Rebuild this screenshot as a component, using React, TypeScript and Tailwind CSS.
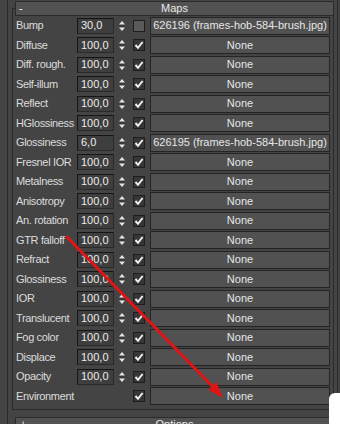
import React from "react";

type Row = { label: string; value?: string; checked: boolean; map: string };

const rows: Row[] = [
  { label: "Bump", value: "30,0", checked: false, map: "626196 (frames-hob-584-brush.jpg)" },
  { label: "Diffuse", value: "100,0", checked: true, map: "None" },
  { label: "Diff. rough.", value: "100,0", checked: true, map: "None" },
  { label: "Self-illum", value: "100,0", checked: true, map: "None" },
  { label: "Reflect", value: "100,0", checked: true, map: "None" },
  { label: "HGlossiness", value: "100,0", checked: true, map: "None" },
  { label: "Glossiness", value: "6,0", checked: true, map: "626195 (frames-hob-584-brush.jpg)" },
  { label: "Fresnel IOR", value: "100,0", checked: true, map: "None" },
  { label: "Metalness", value: "100,0", checked: true, map: "None" },
  { label: "Anisotropy", value: "100,0", checked: true, map: "None" },
  { label: "An. rotation", value: "100,0", checked: true, map: "None" },
  { label: "GTR falloff", value: "100,0", checked: true, map: "None" },
  { label: "Refract", value: "100,0", checked: true, map: "None" },
  { label: "Glossiness", value: "100,0", checked: true, map: "None" },
  { label: "IOR", value: "100,0", checked: true, map: "None" },
  { label: "Translucent", value: "100,0", checked: true, map: "None" },
  { label: "Fog color", value: "100,0", checked: true, map: "None" },
  { label: "Displace", value: "100,0", checked: true, map: "None" },
  { label: "Opacity", value: "100,0", checked: true, map: "None" },
  { label: "Environment", checked: true, map: "None" },
];

function Spinner() {
  return (
    <svg width="10" height="14" viewBox="0 0 10 14" className="ml-[3px] shrink-0">
      <polygon points="2,5.5 5,2 8,5.5" fill="#e6e6e6" />
      <line x1="2" y1="7" x2="8" y2="7" stroke="#2e2e2e" strokeWidth="1" />
      <polygon points="2,8.5 5,12 8,8.5" fill="#e6e6e6" />
    </svg>
  );
}

function Check({ checked }: { checked: boolean }) {
  return (
    <div
      className={
        checked
          ? "w-[12px] h-[12px] border border-[#1e1e1e] bg-[#363636] flex items-center justify-center shrink-0"
          : "w-[12px] h-[12px] border border-[#1e1e1e] bg-[#5a5a5a] shrink-0"
      }
    >
      {checked && (
        <svg width="10" height="10" viewBox="0 0 10 10">
          <path d="M1.5 5 L4 7.8 L8.6 2" stroke="#f0f0f0" strokeWidth="2" fill="none" />
        </svg>
      )}
    </div>
  );
}

function MapRow({ r }: { r: Row }) {
  return (
    <div className="h-[19.5px] flex items-center pl-[3px]">
      <div className="w-[61px] shrink-0 whitespace-nowrap leading-none tracking-[-0.35px] overflow-visible">{r.label}</div>
      {r.value ? (
        <>
          <div className="w-[37px] h-[16px] shrink-0 border border-t-[#151515] border-l-[#151515] border-r-[#2a2a2a] border-b-[#2a2a2a] bg-[#3e3e3e] text-[#ececec] pl-[3px] flex items-center leading-none">
            {r.value}
          </div>
          <Spinner />
        </>
      ) : (
        <div className="w-[50px] shrink-0" />
      )}
      <div className="ml-[6px]">
        <Check checked={r.checked} />
      </div>
      <div className="ml-[5px] w-[180px] h-[18px] shrink-0 border border-[#242424] bg-[#515151] text-[#e6e6e6] flex items-center justify-center whitespace-nowrap leading-none">
        {r.map}
      </div>
    </div>
  );
}

export default function App() {
  return (
    <div className="relative w-[340px] h-[424px] bg-[#444444] overflow-hidden font-['Liberation_Sans',Arial,sans-serif] text-[11px] text-[#dcdcdc]">
      <div className="ml-[7px] w-[331px] h-full border-l border-r border-[#2a2a2a] pl-[4px] pr-[3px] pt-[8px]">
        <div className="border border-[#2a2a2a] pb-[3px]">
          <div className="-mt-[8px] ml-[2px] -mr-[1px] h-[15px] border border-[#2a2a2a] bg-[#525252] relative flex items-center justify-center leading-none">
            <span className="absolute left-[3px] top-[1px] text-[#f0f0f0]">-</span>
            <span className="text-[#e8e8e8]">Maps</span>
          </div>
          {rows.map((r, i) => (
            <MapRow key={i} r={r} />
          ))}
        </div>
        <div className="mt-[7px] ml-[3px] h-[15px] border border-[#2a2a2a] bg-[#525252] relative flex items-center justify-center leading-none">
          <span className="absolute left-[4px] top-[1px] text-[#f0f0f0]">+</span>
          <span className="text-[#e8e8e8]">Options</span>
        </div>
      </div>
      <svg className="absolute left-0 top-0 pointer-events-none" width="340" height="424" viewBox="0 0 340 424">
        <line x1="67" y1="237" x2="214" y2="388" stroke="#e01414" strokeWidth="3" strokeLinecap="round" />
        <polygon points="223,398 208.5,390 216.5,382" fill="#e01414" />
      </svg>
      <div className="absolute left-[329px] top-[393px] w-[12px] h-[32px] bg-white rounded-tl-[6px]" />
    </div>
  );
}
